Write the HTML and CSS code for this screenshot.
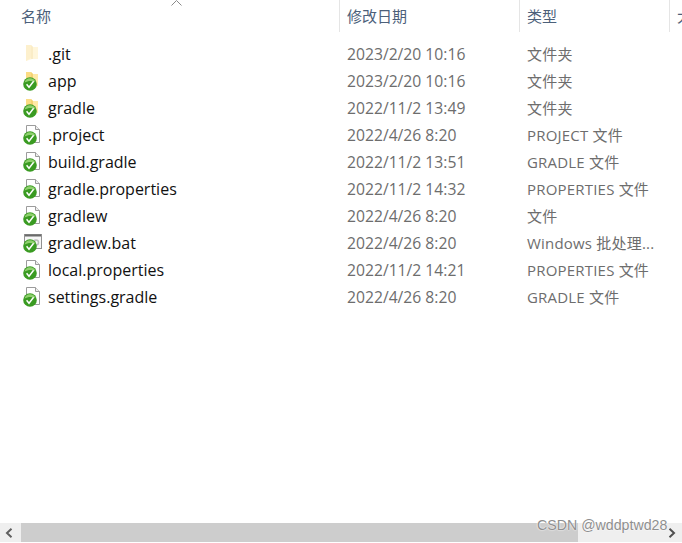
FILE: index.html
```html
<!DOCTYPE html>
<html lang="zh-CN">
<head>
    <meta charset="UTF-8">
    <meta name="viewport" content="width=device-width, initial-scale=1.0">
    <title>files</title>
    <link rel="stylesheet" href="styles.css">
</head>
<body>

<svg class="defs" width="0" height="0">
    <defs>
        <symbol id="folder" viewBox="0 0 12 16">
            <path d="M0 0h5l2 2h5v12H6l-6 2z" fill="#ffe9a6"/>
            <path d="M0 0h5v13l-5 3z" fill="#fbdc84"/>
            <path d="M5 0l2 2v12H5z" fill="#f5d273"/>
        </symbol>
        <symbol id="file" viewBox="0 0 14 18">
            <path d="M.5.500h9l4 4v13H.5z" fill="#fff" stroke="#9c9c9c"/>
            <path d="M9.500.5v4h4" fill="#eee" stroke="#9c9c9c"/>
        </symbol>
        <symbol id="bat" viewBox="0 0 18 15">
            <rect x=".5" y=".5" width="17" height="14" fill="#f6f6f6" stroke="#909090"/>
            <path d="M1 1.500h16" stroke="#6a6a6a" stroke-width="2"/>
            <circle cx="12" cy="8.500" r="2.500" fill="none" stroke="#bcbcbc" stroke-width="1.500"/>
        </symbol>
        <symbol id="check" viewBox="0 0 14 14">
            <circle cx="7" cy="7" r="6.800" fill="#3a9b22"/>
            <path d="M1.500 5.500A5.800 5.800 0 0 1 12.500 5C9 3.400 5 3.500 1.500 5.500z" fill="#8fd06e"/>
            <path d="M3.600 7.200l2.400 3 4.600-6" fill="none" stroke="#fff" stroke-width="1.500"/>
        </symbol>
    </defs>
</svg>

<div class="header">
    <div class="col col-name">名称<svg class="sort" width="11" height="6" viewBox="0 0 11 6"><path d="M.5 5.500l5-5 5 5" fill="none" stroke="#8a8a8a"/></svg></div>
    <div class="col">修改日期</div>
    <div class="col">类型</div>
    <div class="col col-size">大小</div>
</div>

<div class="list">
    <div class="row">
        <div class="name"><span class="icon"><svg class="glyph folder pale"><use href="#folder"/></svg></span>.git</div>
        <div class="date">2023/2/20 10:16</div><div class="type">文件夹</div>
    </div>
    <div class="row">
        <div class="name"><span class="icon"><svg class="glyph folder"><use href="#folder"/></svg><svg class="badge"><use href="#check"/></svg></span>app</div>
        <div class="date">2023/2/20 10:16</div><div class="type">文件夹</div>
    </div>
    <div class="row">
        <div class="name"><span class="icon"><svg class="glyph folder"><use href="#folder"/></svg><svg class="badge"><use href="#check"/></svg></span>gradle</div>
        <div class="date">2022/11/2 13:49</div><div class="type">文件夹</div>
    </div>
    <div class="row">
        <div class="name"><span class="icon"><svg class="glyph"><use href="#file"/></svg><svg class="badge"><use href="#check"/></svg></span>.project</div>
        <div class="date">2022/4/26 8:20</div><div class="type">PROJECT 文件</div>
    </div>
    <div class="row">
        <div class="name"><span class="icon"><svg class="glyph"><use href="#file"/></svg><svg class="badge"><use href="#check"/></svg></span>build.gradle</div>
        <div class="date">2022/11/2 13:51</div><div class="type">GRADLE 文件</div>
    </div>
    <div class="row">
        <div class="name"><span class="icon"><svg class="glyph"><use href="#file"/></svg><svg class="badge"><use href="#check"/></svg></span>gradle.properties</div>
        <div class="date">2022/11/2 14:32</div><div class="type">PROPERTIES 文件</div>
    </div>
    <div class="row">
        <div class="name"><span class="icon"><svg class="glyph"><use href="#file"/></svg><svg class="badge"><use href="#check"/></svg></span>gradlew</div>
        <div class="date">2022/4/26 8:20</div><div class="type">文件</div>
    </div>
    <div class="row">
        <div class="name"><span class="icon"><svg class="glyph wide"><use href="#bat"/></svg><svg class="badge"><use href="#check"/></svg></span>gradlew.bat</div>
        <div class="date">2022/4/26 8:20</div><div class="type">Windows 批处理...</div>
    </div>
    <div class="row">
        <div class="name"><span class="icon"><svg class="glyph"><use href="#file"/></svg><svg class="badge"><use href="#check"/></svg></span>local.properties</div>
        <div class="date">2022/11/2 14:21</div><div class="type">PROPERTIES 文件</div>
    </div>
    <div class="row">
        <div class="name"><span class="icon"><svg class="glyph"><use href="#file"/></svg><svg class="badge"><use href="#check"/></svg></span>settings.gradle</div>
        <div class="date">2022/4/26 8:20</div><div class="type">GRADLE 文件</div>
    </div>
</div>

<div class="scrollbar">
    <div class="arrow"><svg width="8" height="10" viewBox="0 0 8 10"><path d="M6.500 .8L2 5l4.500 4.200" fill="none" stroke="#606060" stroke-width="2"/></svg></div>
    <div class="thumb"></div>
    <div class="arrow arrow-right"><svg width="8" height="10" viewBox="0 0 8 10"><path d="M1.500 .8L6 5 1.500 9.200" fill="none" stroke="#505050" stroke-width="2"/></svg></div>
</div>

<div class="watermark">CSDN @wddptwd28</div>

</body>
</html>
```

FILE: styles.css
```css
*{
    margin: 0;
    padding: 0;
    box-sizing: border-box;
}
body{
    width: 682px;
    height: 543px;
    overflow: hidden;
    background: #fff;
    position: relative;
    font-family: "Open Sans", "Noto Sans CJK SC", sans-serif;
    font-size: 15px;
    display: flex;
    flex-direction: column;
}
.defs{
    position: absolute;
}
.header{
    display: grid;
    grid-template-columns: 340px 180px 150px 12px;
    height: 32px;
    color: #4c607a;
    overflow: hidden;
}
.col{
    position: relative;
    padding-left: 7px;
    line-height: 32px;
    border-right: 1px solid #e5e5e5;
    white-space: nowrap;
}
.col-name{
    padding-left: 21px;
}
.col-size{
    border-right: none;
}
.sort{
    position: absolute;
    left: 171px;
    top: 0;
}
.list{
    flex: 1;
    padding-top: 9px;
}
.row{
    display: grid;
    grid-template-columns: 347px 180px 1fr;
    height: 27px;
    line-height: 27px;
    color: #6d6d6d;
    white-space: nowrap;
}
.name{
    display: flex;
    align-items: center;
    color: #111;
    font-size: 16px;
}
.date{
    font-size: 15.7px;
}
.type{
    letter-spacing: .2px;
}
.icon{
    position: relative;
    width: 48px;
    height: 27px;
    flex: none;
}
.glyph{
    position: absolute;
    left: 26px;
    top: 3px;
    width: 14px;
    height: 18px;
}
.glyph.folder{
    top: 4px;
    width: 12px;
    height: 16px;
}
.glyph.pale{
    opacity: .4;
}
.glyph.wide{
    left: 24px;
    top: 4px;
    width: 18px;
    height: 15px;
}
.badge{
    position: absolute;
    left: 23px;
    top: 9px;
    width: 14px;
    height: 14px;
}
.scrollbar{
    display: flex;
    height: 19px;
    margin-bottom: 1px;
    background: #efefef;
}
.arrow{
    width: 21px;
    flex: none;
    display: flex;
    align-items: center;
    padding-left: 5px;
}
.arrow-right{
    margin-left: auto;
    width: 14px;
    padding-left: 0;
}
.thumb{
    width: 557px;
    background: #cdcdcd;
}
.watermark{
    position: absolute;
    left: 537px;
    top: 517px;
    font-family: "Liberation Sans", sans-serif;
    font-size: 14.2px;
    color: #8f8f8f;
    text-shadow: 0 0 2px #fff, 0 0 1px #fff;
}
```
